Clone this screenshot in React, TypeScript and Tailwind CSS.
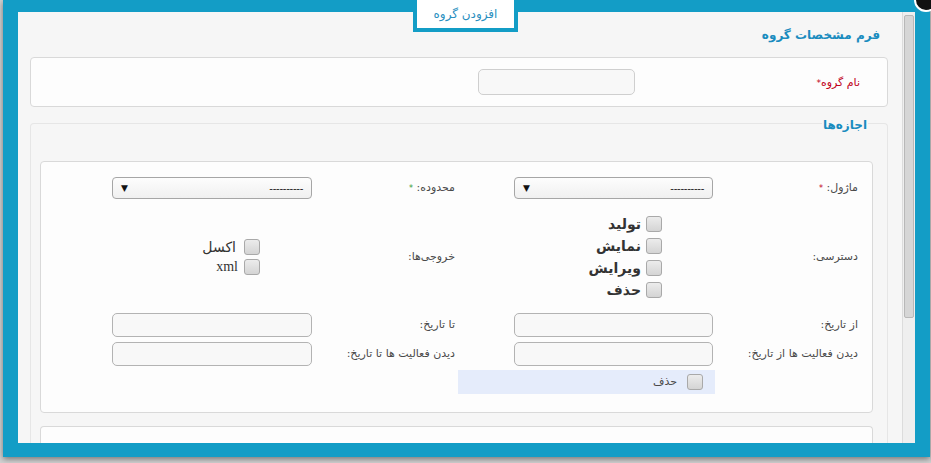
const fa = { fontFamily: '"DejaVu Sans", "Noto Sans", sans-serif' };

function Checkbox() {
  return (
    <span className="inline-block w-[16px] h-[16px] shrink-0 rounded-[3px] border border-[#a9a9a9] bg-[linear-gradient(#ececec,#d4d4d4)]" />
  );
}

function TextInput() {
  return <div className="h-[24px] w-full rounded-[5px] border border-[#b3b3b3] bg-[#f8f8f8]" />;
}

function Select() {
  return (
    <div className="h-[22px] w-full rounded-[4px] border border-[#a6a6a6] bg-[linear-gradient(#fdfdfd,#f0f0f0)] flex items-center justify-between px-[8px]">
      <span className="text-[11px] text-[#222] leading-none tracking-[-0.3px]" style={{ fontFamily: '"Liberation Sans", sans-serif' }}>
        ----------
      </span>
      <span className="text-[9px] text-[#111] leading-none">▼</span>
    </div>
  );
}

function Label({ children }: { children: React.ReactNode }) {
  return <span className="text-[11px] text-[#4a4a4a]">{children}</span>;
}

export default function App() {
  return (
    <div className="w-[931px] h-[463px] overflow-hidden bg-[#d2d2d2] pl-[3px]" style={fa}>
      <div className="relative w-[927px] h-[457px] bg-[#139dc6] pt-[12px] pl-[15px] pr-[15px] pb-[14px] shadow-[0_2px_6px_rgba(0,0,0,0.45)]">
        {/* tab */}
        <div className="absolute left-[410px] top-0 w-[105px] h-[32px] border-4 border-t-0 border-[#139dc6] bg-white flex items-center justify-center z-10">
          <span className="text-[12px] text-[#2a8fc0]">افزودن گروه</span>
        </div>
        {/* close */}
        <div className="absolute -top-[12px] -right-[8px] w-[24px] h-[24px] rounded-full bg-[#111] border-2 border-white z-10" />

        <div className="flex h-full">
          <div className="flex-1 bg-[#f6f6f6] overflow-hidden" dir="rtl">
            <div className="pl-[12px] pr-[14px]">
              <div className="h-[45px] flex items-center pr-[8px] pt-[1px]">
                <span className="text-[12px] font-bold text-[#1a8cbf]">فرم مشخصات گروه</span>
              </div>

              {/* group name */}
              <div className="h-[50px] rounded-[4px] border border-[#d9d9d9] bg-[#fdfdfd] grid grid-cols-[225px_157px] items-start pt-[11px] pr-[27px]">
                <span className="text-[11px] text-[#c0001a] pt-[6px]">نام گروه<span className="text-[9px]">*</span></span>
                <div className="h-[26px] rounded-[5px] border border-[#cfcfcf] bg-[#f8f8f8]" />
              </div>

              {/* permissions */}
              <div className="mt-[16px] rounded-t-[4px] border border-b-0 border-[#e6e6e6]">
                <div className="h-[37px] flex items-start pr-[19px]">
                  <span className="-mt-[8px] text-[12px] font-bold text-[#1a8cbf] bg-[#f6f6f6] px-[1px]">اجازه‌ها</span>
                </div>
                <div className="mr-[14px] ml-[9px] rounded-[4px] border border-[#d9d9d9] bg-[#fdfdfd] pt-[15px] pr-[14px] pb-[18px]">
                  <div className="grid grid-cols-[145px_199px_59px_143px_200px] items-center">
                    <span className="text-[11px] text-[#4a4a4a]">
                      ماژول: <span className="text-[8px] text-[#c0001a]">*</span>
                    </span>
                    <Select />
                    <span />
                    <span className="text-[11px] text-[#4a4a4a]">
                      محدوده: <span className="text-[8px] text-[#3a9a3a]">*</span>
                    </span>
                    <Select />
                  </div>

                  <div className="grid grid-cols-[145px_199px_59px_143px_200px] items-center mt-[17px]">
                    <Label>دسترسی:</Label>
                    <div className="flex flex-col gap-[6px] pr-[51px]">
                      {['تولید', 'نمایش', 'ویرایش', 'حذف'].map((t) => (
                        <div key={t} className="flex items-center gap-[5px] h-[16px]">
                          <Checkbox />
                          <span className="text-[14px] font-bold text-[#333] leading-none">{t}</span>
                        </div>
                      ))}
                    </div>
                    <span />
                    <Label>خروجی‌ها:</Label>
                    <div className="flex flex-col gap-[4px] pr-[52px]">
                      <div className="flex items-center gap-[8px] h-[16px]">
                        <Checkbox />
                        <span className="text-[14px] text-[#333] leading-none">اکسل</span>
                      </div>
                      <div className="flex items-center gap-[6px] h-[16px]">
                        <Checkbox />
                        <span className="text-[14px] text-[#333] leading-none" style={{ fontFamily: '"Liberation Serif", serif' }}>
                          xml
                        </span>
                      </div>
                    </div>
                  </div>

                  <div className="grid grid-cols-[145px_199px_59px_143px_200px] items-center mt-[15px] gap-y-[5px]">
                    <Label>از تاریخ:</Label>
                    <TextInput />
                    <span />
                    <Label>تا تاریخ:</Label>
                    <TextInput />

                    <Label>دیدن فعالیت ها از تاریخ:</Label>
                    <TextInput />
                    <span />
                    <Label>دیدن فعالیت ها تا تاریخ:</Label>
                    <TextInput />
                  </div>

                  <div className="grid grid-cols-[143px_257px] mt-[4px]">
                    <span />
                    <div className="h-[24px] bg-[#e5ecfb] flex items-center gap-[10px] pr-[12px]">
                      <Checkbox />
                      <span className="text-[11px] text-[#4a4a4a]">حذف</span>
                    </div>
                  </div>
                </div>

                <div className="mt-[13px] mr-[14px] ml-[9px] h-[40px] rounded-t-[4px] border border-b-0 border-[#d9d9d9] bg-[#fdfdfd]" />
              </div>
            </div>
          </div>

          {/* scrollbar */}
          <div className="w-[13px] bg-[#efefef] border-l border-[#dcdcdc] pt-[3px] px-[1px]">
            <div className="h-[303px] rounded-[2px] border border-[#b8b8b8] bg-[#d6d6d6]" />
          </div>
        </div>
      </div>
    </div>
  );
}
